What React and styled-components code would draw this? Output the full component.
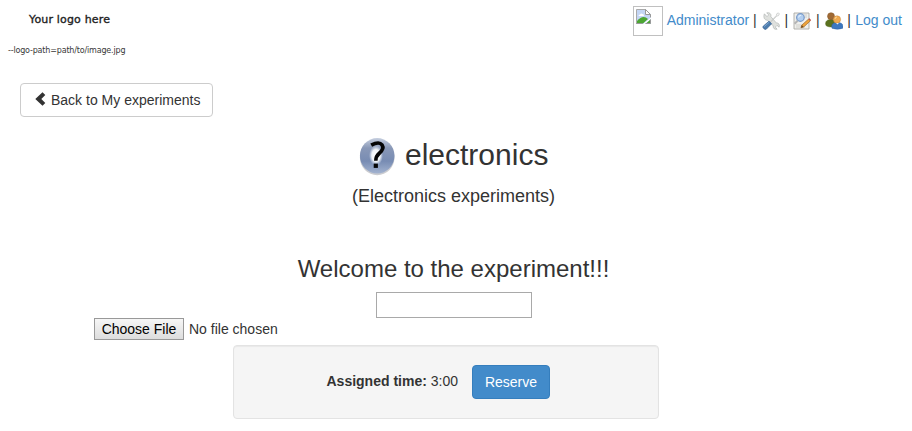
import React from "react";
import styled, { createGlobalStyle } from "styled-components";

const GlobalStyle = createGlobalStyle`
  *, *::before, *::after { box-sizing: border-box; }
  body {
    margin: 0;
    background: #fff;
    color: #333;
    font: 14px/20px "Liberation Sans", Arial, sans-serif;
    overflow: hidden;
  }
`;

const Page = styled.div`
  width: 912px;
  height: 431px;
  display: flex;
  flex-direction: column;
`;
const Header = styled.header`
  display: flex;
  justify-content: space-between;
  height: 83px;
  padding: 0 10px 0 8px;
`;
const Logo = styled.div`
  display: flex;
  flex-direction: column;
  padding-top: 13px;
  font-family: "DejaVu Sans", sans-serif;
  color: #222;
  white-space: nowrap;
`;
const LogoTitle = styled.span`
  margin-left: 21px;
  font-size: 11px;
  line-height: 14px;
  letter-spacing: 0.17px;
  -webkit-text-stroke: 0.35px #222;
`;
const LogoPath = styled.span`
  margin-top: 17px;
  font-size: 8px;
  line-height: 14px;
  letter-spacing: -0.17px;
  color: #383838;
`;
const UserBar = styled.nav`
  display: flex;
  align-items: center;
  height: 30px;
  margin-top: 6px;
  white-space: pre;
`;
const Avatar = styled.span`
  width: 30px;
  height: 30px;
  margin-right: 4px;
  border: 1px solid #c0c0c0;
`;
const Link = styled.a`
  color: #428bca;
  line-height: 20px;
  margin-top: -2px;
`;
const Divider = styled.span`
  width: 4px;
  margin: -2px 4px 0;
  color: #333;
`;
const IconLink = styled.a`
  display: flex;
  justify-content: center;
  width: 19.4px;
  height: 18px;
`;
const BackButton = styled.button`
  display: flex;
  align-items: center;
  align-self: flex-start;
  width: 193px;
  height: 34px;
  margin-left: 20px;
  padding: 0 0 0 13px;
  border: 1px solid #ccc;
  border-radius: 4px;
  background: #fff;
  color: #333;
  font: inherit;
  svg { margin: -2px 5px 0 0; }
`;
const Main = styled.main`
  display: flex;
  flex-direction: column;
`;
const Title = styled.h1`
  display: flex;
  align-items: center;
  align-self: flex-start;
  height: 40px;
  margin: 20px 0 0 358px;
  font-size: 30px;
  font-weight: 400;
  line-height: 33px;
  svg { margin-right: 9px; }
  span { margin-top: -6px; }
`;
const Heading = styled.h2`
  width: 907px;
  margin: ${(p) => p.$top}px 0 0;
  font-size: ${(p) => p.$size}px;
  line-height: ${(p) => p.$line}px;
  font-weight: 400;
  text-align: center;
`;
const TextInput = styled.input`
  width: 156px;
  height: 26px;
  margin: 10px 0 0 376px;
  border: 1px solid #a9a9a9;
  border-radius: 0;
  background: #fff;
  outline: none;
`;
const FileField = styled.div`
  display: flex;
  align-items: center;
  gap: 5px;
  height: 22px;
  margin-left: 94px;
`;
const FileButton = styled.button`
  width: 90px;
  height: 22px;
  padding: 0 0 0 0;
  border: 1px solid #999;
  border-radius: 0;
  background: linear-gradient(#f6f6f6, #ddd);
  color: #000;
  font: inherit;
`;
const Well = styled.section`
  display: flex;
  align-items: flex-start;
  width: 426px;
  height: 74px;
  margin: 5px 0 0 233px;
  padding: 19px 0 0 92.5px;
  border: 1px solid #e3e3e3;
  border-radius: 4px;
  background: #f5f5f5;
  box-shadow: inset 0 1px 1px rgba(0, 0, 0, 0.05);
`;
const Assigned = styled.span`
  width: 145.5px;
  margin-top: 6px;
`;
const ReserveButton = styled.button`
  width: 78px;
  height: 34px;
  padding: 0;
  border: 1px solid #357ebd;
  border-radius: 4px;
  background: #428bca;
  color: #fff;
  font: inherit;
`;

const BrokenImage = () => (
  <svg width="19" height="19" viewBox="0 0 19 19">
    <path d="M2 2.5h10l5 5v9.5h-15z" fill="#c4d6f5" />
    <path d="M2.5 17V2.5H12" fill="none" stroke="#aaa" />
    <path d="M11.5 2.5v5h5z" fill="#fff" stroke="#999" />
    <path d="M16.5 7.5v3" stroke="#999" />
    <path d="M4.5 9q0-1.6 1.6-1.6Q7 5.8 8.4 7.1q1.8.1 1.6 1.9z" fill="#fff" />
    <path d="M3 16.5V14Q9 7 14 12l-5 4.5z" fill="#4ca632" />
    <path d="M8.5 17.5 17.5 10v1.5l-7 6z" fill="#fff" />
    <path d="m12 16.5 4.5-4v4z" fill="#4ca632" />
    <path d="M2.5 16.5h6M11.5 16.5h5v-4" fill="none" stroke="#999" />
  </svg>
);
const ToolsIcon = () => (
  <svg width="18" height="18" viewBox="1 1 18 18">
    <path d="M3.4 2.8 6 5.6l1.7-1.7L5.7 1.8c3-.6 4.8 1.2 4.2 3.9l5.4 6.2c2.4-.2 3.8 2 2.8 4.3L16 14.4l-1.7 1.7 1.8 2.1c-2.4.6-4.2-.9-3.9-3.3L6.5 9.2C3.5 9.4 2 6.1 3.4 2.8z" fill="#dfe1de" stroke="#a8adab" strokeWidth=".6" />
    <path d="m8.8 11.2 6.5-6.7.5-1.8 1.6-.8 1 1-.9 1.7-1.7.5-6.6 6.8z" fill="#f7f7f7" stroke="#a9adab" strokeWidth=".5" />
    <path d="m8 10.2 2.6 2.5-5.2 5.4c-1.2 1.2-4.5-1.4-3.2-2.9z" fill="#4d7dae" stroke="#345f92" strokeWidth=".7" />
    <path d="m3.2 15.7 5-4.5" stroke="#7ba5d0" />
  </svg>
);
const SearchEditIcon = () => (
  <svg width="18" height="18" viewBox="1 1 18 18">
    <path d="M2 2h15v16H2z" fill="#efefec" stroke="#aaa9a5" strokeWidth=".9" />
    <path d="M4 14h10M4 16h9M12 4h3M12 6h3" stroke="#cfcfcb" />
    <path d="m5.6 9.7-3 3" stroke="#b4b4b4" strokeWidth="2" />
    <circle cx="8.4" cy="6.5" r="3.8" fill="#b3cff0" stroke="#7899c7" strokeWidth="1.2" />
    <path d="M6.5 6.5q.5-2.4 2.7-2.3" fill="none" stroke="#e4f1ff" strokeWidth="1.1" />
    <path d="m9.8 14.1 6.7-6 1.8 1.8-6.6 6.1-2.8.8z" fill="#efa43c" stroke="#94612a" strokeWidth=".6" />
    <path d="m16.5 8.1 1-.9 1.5 1.8-.8.9z" fill="#bf4541" />
    <path d="m9 16.8.8-2.7 1.9 1.9z" fill="#6b4b25" />
  </svg>
);
const UsersIcon = () => (
  <svg width="18" height="18" viewBox="1 1 18 18">
    <path d="M2 14.5c-1.3-4 1-6 5-6s5 2 4.5 6.5Q5 17 2 14.5z" fill="#5b711e" stroke="#53651a" strokeWidth=".5" />
    <circle cx="7" cy="5.2" r="3.5" fill="#a06a35" stroke="#845525" strokeWidth=".5" />
    <path d="M8 17.3c-1-4 1-5.8 5.4-5.8s6.4 2 5.3 5.8q-5.2 1.8-10.7 0z" fill="#3d78bf" stroke="#2d63a4" strokeWidth=".5" />
    <path d="m11.7 11.6 1.7 2 1.9-2" fill="#fff" />
    <circle cx="13" cy="8.4" r="3.6" fill="#efaa50" stroke="#ca8739" strokeWidth=".5" />
    <path d="M11 8q0-2 2-2" fill="none" stroke="#ffdb9a" />
  </svg>
);
const Chevron = () => (
  <svg width="12" height="14" viewBox="0 0 12 14">
    <path d="M8.5.3 11.3 3 7.3 7l4 4-2.8 2.7L1.3 7z" fill="#333" />
  </svg>
);
const QuestionIcon = () => (
  <svg width="38" height="40" viewBox="0 0 38 40">
    <defs>
      <linearGradient id="sphere" x1="0" y1="0" x2="0" y2="1">
        <stop stopColor="#c6cfdf" />
        <stop offset=".28" stopColor="#8998b7" />
        <stop offset=".65" stopColor="#788cb3" />
        <stop offset="1" stopColor="#a3b3d0" />
      </linearGradient>
      <radialGradient id="glow">
        <stop stopColor="#fff" />
        <stop offset=".6" stopColor="#f1f4f8" />
        <stop offset="1" stopColor="#d9e2ef" stopOpacity="0" />
      </radialGradient>
    </defs>
    <ellipse cx="19.2" cy="20.5" rx="17.3" ry="17.7" fill="#cbccd0" />
    <ellipse cx="19.2" cy="18.8" rx="17.3" ry="17.7" fill="url(#sphere)" />
    <ellipse cx="18" cy="18.5" rx="7" ry="10" fill="url(#glow)" />
    <path d="M13.2 8.2Q21 4 24 7.8c2.3 3.6-.2 6.5-2.9 8.7-2.8 2.3-3.3 4.1-3.3 7.3" fill="none" stroke="#050505" strokeWidth="3.6" />
    <path d="M15.7 26.6h4.2v4.3h-4.2z" fill="#050505" />
  </svg>
);

export default function App() {
  return (
    <Page>
      <GlobalStyle />
      <Header>
        <Logo>
          <LogoTitle>Your logo here</LogoTitle>
          <LogoPath>--logo-path=path/to/image.jpg</LogoPath>
        </Logo>
        <UserBar>
          <Avatar><BrokenImage /></Avatar>
          <Link>Administrator</Link>
          <Divider>|</Divider>
          <IconLink><ToolsIcon /></IconLink>
          <Divider>|</Divider>
          <IconLink><SearchEditIcon /></IconLink>
          <Divider>|</Divider>
          <IconLink><UsersIcon /></IconLink>
          <Divider>|</Divider>
          <Link>Log out</Link>
        </UserBar>
      </Header>
      <BackButton><Chevron />Back to My experiments</BackButton>
      <Main>
        <Title><QuestionIcon /><span>electronics</span></Title>
        <Heading $top={9} $size={18} $line={20}>(Electronics experiments)</Heading>
        <Heading $top={50} $size={24} $line={26}>Welcome to the experiment!!!</Heading>
        <TextInput aria-label="Experiment input" />
        <FileField><FileButton>Choose File</FileButton><span>No file chosen</span></FileField>
        <Well>
          <Assigned><b>Assigned time:</b> 3:00</Assigned>
          <ReserveButton>Reserve</ReserveButton>
        </Well>
      </Main>
    </Page>
  );
}
